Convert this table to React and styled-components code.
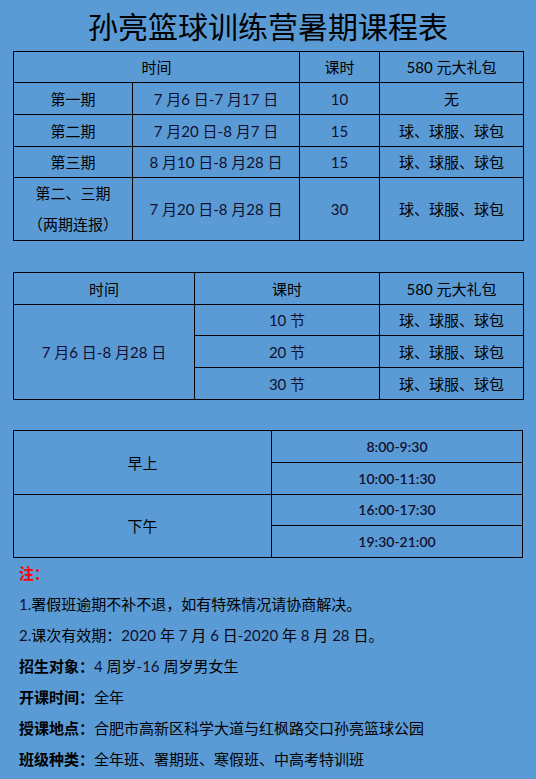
import React from "react";
import styled, { createGlobalStyle } from "styled-components";

const Global = createGlobalStyle`
  html, body { margin: 0; padding: 0; background: #5b9bd5; }
  body { font-family: Lato, "Noto Sans CJK SC", sans-serif; }
`;

const Page = styled.div`
  width: 536px;
  min-height: 779px;
  box-sizing: border-box;
  padding: 0 13px;
  background: #5b9bd5;
  color: #000;
  display: flex;
  flex-direction: column;
`;

const Title = styled.h1`
  margin: 0;
  height: 51px;
  line-height: 51px;
  text-align: center;
  font-size: 30px;
  font-weight: 400;
  letter-spacing: 0;
  font-family: "Noto Sans CJK SC", sans-serif;
  color: #000;
`;

const Table = styled.table`
  width: 510px;
  border-collapse: collapse;
  table-layout: fixed;
  margin-top: ${(p) => p.$gap || 0}px;
  font-size: 15px;
`;

const Cell = styled.td`
  border: 1px solid #000;
  padding: 0;
  box-sizing: border-box;
  text-align: center;
  vertical-align: middle;
  height: ${(p) => p.$h || 31}px;
  line-height: ${(p) => p.$lh || 18}px;
  font-weight: ${(p) => (p.$bold ? 600 : 400)};
  color: ${(p) => (p.$num ? "#101030" : "#000")};
  font-size: ${(p) => p.$size || 15}px;
`;

const Notes = styled.div`
  padding-left: 6px;
  font-size: 15px;
  display: flex;
  flex-direction: column;
`;

const Line = styled.div`
  height: 31px;
  line-height: 31px;
  white-space: nowrap;
  color: #000;
`;

const Red = styled.span`
  color: #ff0000;
  font-weight: 700;
`;

const Label = styled.span`
  font-weight: 700;
`;

const Num = styled.span`
  color: #101030;
`;

const gift = "球、球服、球包";

export default function App() {
  return (
    <>
      <Global />
      <Page>
        <Title>孙亮篮球训练营暑期课程表</Title>
        <Table>
          <colgroup>
            <col style={{ width: 119 }} />
            <col style={{ width: 167 }} />
            <col style={{ width: 80 }} />
            <col style={{ width: 144 }} />
          </colgroup>
          <tbody>
            <tr>
              <Cell colSpan={2} $h={31}>时间</Cell>
              <Cell>课时</Cell>
              <Cell>580 元大礼包</Cell>
            </tr>
            <tr>
              <Cell $h={32}>第一期</Cell>
              <Cell $num>7 月6 日-7 月17 日</Cell>
              <Cell $num>10</Cell>
              <Cell>无</Cell>
            </tr>
            <tr>
              <Cell $h={32}>第二期</Cell>
              <Cell $num>7 月20 日-8 月7 日</Cell>
              <Cell $num>15</Cell>
              <Cell>{gift}</Cell>
            </tr>
            <tr>
              <Cell $h={31}>第三期</Cell>
              <Cell $num>8 月10 日-8 月28 日</Cell>
              <Cell $num>15</Cell>
              <Cell>{gift}</Cell>
            </tr>
            <tr>
              <Cell $h={63} $lh={31}>
                第二、三期
                <br />
                （两期连报）
              </Cell>
              <Cell $num>7 月20 日-8 月28 日</Cell>
              <Cell $num>30</Cell>
              <Cell>{gift}</Cell>
            </tr>
          </tbody>
        </Table>

        <Table $gap={31}>
          <colgroup>
            <col style={{ width: 181 }} />
            <col style={{ width: 185 }} />
            <col style={{ width: 144 }} />
          </colgroup>
          <tbody>
            <tr>
              <Cell $h={32}>时间</Cell>
              <Cell>课时</Cell>
              <Cell>580 元大礼包</Cell>
            </tr>
            <tr>
              <Cell rowSpan={3} $num>7 月6 日-8 月28 日</Cell>
              <Cell $h={31} $num>10 节</Cell>
              <Cell>{gift}</Cell>
            </tr>
            <tr>
              <Cell $h={32} $num>20 节</Cell>
              <Cell>{gift}</Cell>
            </tr>
            <tr>
              <Cell $h={32} $num>30 节</Cell>
              <Cell>{gift}</Cell>
            </tr>
          </tbody>
        </Table>

        <Table $gap={30}>
          <colgroup>
            <col style={{ width: 258 }} />
            <col style={{ width: 251 }} />
          </colgroup>
          <tbody>
            <tr>
              <Cell rowSpan={2}>早上</Cell>
              <Cell $h={32} $num $bold $size={14}>8:00-9:30</Cell>
            </tr>
            <tr>
              <Cell $h={32} $num $bold $size={14}>10:00-11:30</Cell>
            </tr>
            <tr>
              <Cell rowSpan={2}>下午</Cell>
              <Cell $h={31} $num $bold $size={14}>16:00-17:30</Cell>
            </tr>
            <tr>
              <Cell $h={32} $num $bold $size={14}>19:30-21:00</Cell>
            </tr>
          </tbody>
        </Table>

        <Notes>
          <Line>
            <Red>注：</Red>
          </Line>
          <Line>
            <Num>1.</Num>署假班逾期不补不退，如有特殊情况请协商解决。
          </Line>
          <Line>
            <Num>2.</Num>课次有效期：<Num>2020 </Num>年 <Num>7 </Num>月 <Num>6 </Num>日
            <Num>-2020 </Num>年 <Num>8 </Num>月 <Num>28 </Num>日。
          </Line>
          <Line>
            <Label>招生对象：</Label>
            <Num>4 </Num>周岁<Num>-16 </Num>周岁男女生
          </Line>
          <Line>
            <Label>开课时间：</Label>全年
          </Line>
          <Line>
            <Label>授课地点：</Label>合肥市高新区科学大道与红枫路交口孙亮篮球公园
          </Line>
          <Line>
            <Label>班级种类：</Label>全年班、署期班、寒假班、中高考特训班
          </Line>
        </Notes>
      </Page>
    </>
  );
}
